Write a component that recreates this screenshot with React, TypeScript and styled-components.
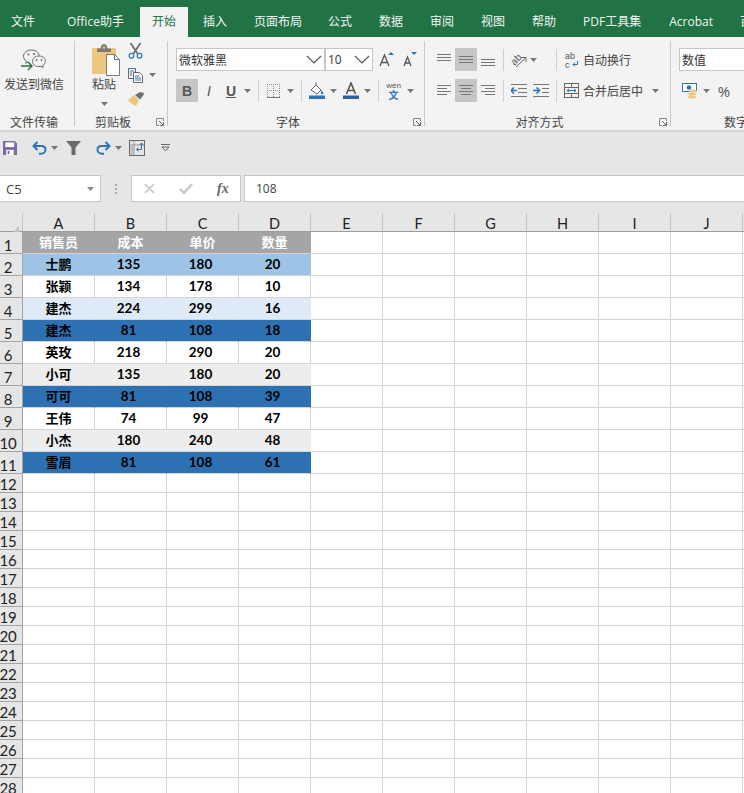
import * as React from "react";
import styled, { createGlobalStyle } from "styled-components";

const CJK = `"Noto Sans CJK SC", "Noto Sans", sans-serif`;
const CELL = `Lato, "Noto Sans CJK SC", sans-serif`;

const tabs = [
    { label: "文件", gap: -2.5 },
    { label: "Office助手", gap: 5 },
    { label: "开始", gap: 2.5 },
    { label: "插入", gap: 1.5 },
    { label: "页面布局", gap: 0 },
    { label: "公式", gap: -1 },
    { label: "数据", gap: 0 },
    { label: "审阅", gap: 0 },
    { label: "视图", gap: 0 },
    { label: "帮助", gap: 0 },
    { label: "PDF工具集", gap: 0 },
    { label: "Acrobat", gap: 1 },
    { label: "百度网盘", gap: 0 },
];
const columns = ["A", "B", "C", "D", "E", "F", "G", "H", "I", "J", "K"];

const tableRows = [
    { fill: "#a5a5a5", color: "#fff", cells: ["销售员", "成本", "单价", "数量"] },
    { fill: "#9dc3e6", cells: ["士鹏", "135", "180", "20"] },
    { cells: ["张颖", "134", "178", "10"] },
    { fill: "#deeaf6", cells: ["建杰", "224", "299", "16"] },
    { fill: "#2e71b3", cells: ["建杰", "81", "108", "18"] },
    { cells: ["英玫", "218", "290", "20"] },
    { fill: "#ededed", cells: ["小可", "135", "180", "20"] },
    { fill: "#2e71b3", cells: ["可可", "81", "108", "39"] },
    { cells: ["王伟", "74", "99", "47"] },
    { fill: "#ededed", cells: ["小杰", "180", "240", "48"] },
    { fill: "#2e71b3", cells: ["雪眉", "81", "108", "61"] },
];

const GlobalStyle = createGlobalStyle`
html, body {
    margin: 0;
    padding: 0;
    width: 744px;
    height: 793px;
    overflow: hidden;
    background: #fff;
}
`;

const Page = styled.div`
width: 744px;
height: 793px;
overflow: hidden;
display: flex;
flex-direction: column;
font-family: ${CJK};
color: #444;
`;

const TabBar = styled.div`
height: 37px;
flex: none;
box-sizing: border-box;
padding-top: 7px;
background: #217346;
display: flex;
white-space: nowrap;
`;

const Tab = styled.div<{ $active?: boolean; $gap?: number }>`
height: 30px;
flex: none;
box-sizing: border-box;
padding: 0 ${props => props.$active ? 12 : 13.5}px 2px;
margin-left: ${props => props.$gap || 0}px;
display: flex;
align-items: center;
font-size: 12px;
font-family: "Open Sans", ${CJK};
background: ${props => props.$active ? "#f3f3f3" : "transparent"};
color: ${props => props.$active ? "#217346" : "#f1f6f3"};
`;

const Ribbon = styled.div`
height: 93px;
flex: none;
box-sizing: border-box;
padding: 4px 0;
background: #f3f3f3;
display: flex;
overflow: hidden;
`;

const Group = styled.div<{ $w: number; $last?: boolean }>`
width: ${props => props.$w}px;
flex: none;
box-sizing: border-box;
display: flex;
flex-direction: column;
border-right: ${props => props.$last ? "none" : "1px solid #c8c8c8"};
`;

const GroupBody = styled.div<{ $pad?: number }>`
flex: 1;
min-height: 0;
box-sizing: border-box;
padding: 7px 0 0 ${props => props.$pad || 0}px;
display: flex;
`;

const GroupTitle = styled.div<{ $shift?: number }>`
height: 17px;
flex: none;
display: grid;
grid-template-columns: 1fr auto 1fr;
align-items: center;
font-size: 12px;
line-height: 17px;
color: #444;
margin-bottom: -4px;
& > span { grid-column: 2; margin-right: ${props => (props.$shift ?? 8) * 2}px; }
& > svg { justify-self: end; margin: 1px 3px 0 0; }
`;

const NumberTitle = styled.div`
padding-left: 53px;
font-size: 12px;
line-height: 17px;
height: 17px;
flex: none;
margin-bottom: -4px;
white-space: nowrap;
`;

const BigColumn = styled.div<{ $w: number; $top?: number }>`
width: ${props => props.$w}px;
flex: none;
display: flex;
flex-direction: column;
align-items: center;
margin-top: ${props => props.$top || 0}px;
`;

const BigLabel = styled.div<{ $top: number }>`
font-size: 12px;
line-height: 16px;
margin-top: ${props => props.$top}px;
white-space: nowrap;
color: #444;
`;

const PasteCaret = styled.div`
margin-top: 7px;
line-height: 0;
`;

const PasteGlyph = styled.div`
margin-left: 3px;
line-height: 0;
`;

const SmallTools = styled.div`
display: flex;
flex-direction: column;
margin: -5px 0 0 7px;
gap: 8px;
`;

const SmallTool = styled.div`
display: flex;
align-items: center;
height: 16px;
gap: 6px;
`;

const Rows = styled.div`
display: flex;
flex-direction: column;
gap: 8px;
`;

const ToolRow = styled.div`
height: 23px;
display: flex;
align-items: center;
`;

const Select = styled.div<{ $w: number }>`
width: ${props => props.$w}px;
height: 23px;
box-sizing: border-box;
flex: none;
padding: 0 2px 1px 2px;
display: flex;
align-items: center;
justify-content: space-between;
background: #fff;
border: 1px solid #c6c6c6;
font-size: 12px;
color: #333;
`;

const SizeText = styled.span`
font-family: "Open Sans", sans-serif;
`;

const ToolButton = styled.div<{ $w?: number; $active?: boolean; $ml?: number }>`
width: ${props => props.$w || 22}px;
height: 23px;
flex: none;
margin-left: ${props => props.$ml || 0}px;
display: flex;
align-items: center;
justify-content: center;
background: ${props => props.$active ? "#c6c6c6" : "transparent"};
color: #555;
`;

const StyleLetter = styled.span<{ $italic?: boolean; $under?: boolean }>`
font-family: "Liberation Sans", sans-serif;
font-size: 14px;
font-weight: ${props => props.$italic ? 400 : 700};
font-style: ${props => props.$italic ? "italic" : "normal"};
text-decoration: ${props => props.$under ? "underline" : "none"};
color: #555;
`;

const WenStack = styled.div`
display: flex;
flex-direction: column;
align-items: center;
`;

const WenTop = styled.span`
font-family: "Liberation Sans", sans-serif;
font-size: 8px;
line-height: 8px;
color: #555;
`;

const WenBottom = styled.span`
font-size: 10px;
line-height: 10px;
font-weight: 700;
color: #2e75b6;
`;

const PercentText = styled.span`
font-family: "Open Sans", sans-serif;
font-size: 15px;
color: #555;
`;

const Divider = styled.div<{ $l: number; $r: number }>`
width: 1px;
height: 22px;
flex: none;
background: #d0d0d0;
margin: 0 ${props => props.$r}px 0 ${props => props.$l}px;
`;

const ToolText = styled.span<{ $ml?: number }>`
font-size: 12px;
white-space: nowrap;
color: #444;
margin-left: ${props => props.$ml || 0}px;
`;

const QuickBar = styled.div`
height: 45px;
flex: none;
box-sizing: border-box;
border-top: 2px solid #d6d6d6;
background: #e6e6e6;
display: flex;
align-items: center;
padding: 0 0 12px 3px;
`;

const QuickItem = styled.div<{ $ml?: number }>`
display: flex;
align-items: center;
margin-left: ${props => props.$ml || 0}px;
gap: 4px;
`;

const FormulaBar = styled.div`
height: 27px;
flex: none;
background: #e6e6e6;
display: flex;
align-items: stretch;
`;

const NameBox = styled.div`
width: 101px;
flex: none;
box-sizing: border-box;
display: flex;
align-items: center;
justify-content: space-between;
padding: 0 6px 0 6px;
background: #fff;
border: 1px solid #c6c6c6;
border-left: none;
font-family: "Open Sans", sans-serif;
font-size: 13px;
color: #444;
`;

const Grip = styled.div`
width: 30px;
flex: none;
display: flex;
flex-direction: column;
align-items: center;
justify-content: center;
gap: 2px;
& > i { width: 2px; height: 2px; background: #a8a8a8; display: block; }
`;

const FxBox = styled.div`
width: 110px;
flex: none;
box-sizing: border-box;
display: flex;
align-items: center;
padding-left: 12px;
gap: 24px;
background: #fff;
border: 1px solid #c6c6c6;
`;

const FxMark = styled.span`
font-family: "Liberation Serif", serif;
font-style: italic;
font-weight: 700;
font-size: 14px;
color: #666;
`;

const FormulaInput = styled.div`
flex: 1;
margin-left: 3px;
box-sizing: border-box;
display: flex;
align-items: center;
padding-left: 11px;
background: #fff;
border: 1px solid #c6c6c6;
border-right: none;
font-family: "Open Sans", sans-serif;
font-size: 12px;
color: #444;
`;

const HeaderRow = styled.div`
height: 30px;
flex: none;
box-sizing: border-box;
padding-top: 11px;
background: #e6e6e6;
border-bottom: 1px solid #9c9c9c;
display: flex;
`;

const Corner = styled.div`
width: 23px;
flex: none;
box-sizing: border-box;
border-right: 1px solid #c4c4c4;
padding: 5px 0 0 8px;
`;

const ColumnHead = styled.div`
width: 72px;
flex: none;
box-sizing: border-box;
border-right: 1px solid #c0c0c0;
display: flex;
align-items: flex-end;
justify-content: center;
font-family: ${CELL};
font-size: 14.5px;
line-height: 15px;
color: #222;
`;

const SheetRow = styled.div<{ $h: number }>`
height: ${props => props.$h}px;
flex: none;
display: flex;
`;

const RowHead = styled.div`
width: 23px;
flex: none;
box-sizing: border-box;
padding-right: 6px;
background: #e6e6e6;
border-right: 1px solid #a4a4a4;
border-bottom: 1px solid #a4a4a4;
display: flex;
align-items: flex-end;
justify-content: center;
font-family: ${CELL};
font-size: 15px;
line-height: 15px;
letter-spacing: -0.3px;
color: #222;
`;

const Cell = styled.div<{ $fill?: string; $color?: string; $numeric?: boolean }>`
width: 72px;
flex: none;
box-sizing: border-box;
padding: 0 ${props => props.$numeric ? 4 : 0}px 2px 0;
background: ${props => props.$fill || "#fff"};
border-right: 1px solid ${props => props.$fill || "#d4d4d4"};
border-bottom: 1px solid #d4d4d4;
display: flex;
align-items: center;
justify-content: center;
font-family: ${CELL};
font-weight: 700;
font-size: ${props => props.$numeric ? 13.5 : 13}px;
color: ${props => props.$color || "#000"};
`;

const Caret = ({ color = "#777" }: { color?: string }) => (
    <svg width="7" height="4" viewBox="0 0 7 4"><path d="M0 0h7L3.5 4z" fill={color} /></svg>
);

const Chevron = () => (
    <svg width="16" height="9" viewBox="0 0 16 9" fill="none"><path d="M1 1l7 7 7-7" stroke="#555" strokeWidth="1.2" /></svg>
);

const Launcher = () => (
    <svg width="8" height="8" viewBox="0 0 8 8" fill="none">
        <path d="M7.5 3V.5H.5v7H3" stroke="#888" />
        <path d="M3 3l4 4M7.5 4v3.5H4" stroke="#666" />
    </svg>
);

const WeChatIcon = () => (
    <svg width="26" height="23" viewBox="0 0 26 23" fill="none">
        <path d="M10.5 1C5.8 1 2.5 3.8 2.5 7.3c0 2 1 3.6 2.8 4.8l-.6 2.2 2.5-1.3" stroke="#666" />
        <path d="M18.3 6.3C17.6 3 14.4 1 10.5 1" stroke="#666" />
        <path d="M18 7c-3.8 0-6.5 2.4-6.5 5.3s2.7 5.3 6.5 5.3c.8 0 1.5-.1 2.2-.3l2 1.2-.5-2c1.6-1 2.6-2.5 2.6-4.2C24.8 9.4 21.8 7 18 7z" fill="#f3f3f3" stroke="#666" />
        <circle cx="7.5" cy="5.5" r="1" fill="#666" />
        <circle cx="13" cy="5" r="1" fill="#666" />
        <circle cx="15.5" cy="11" r=".9" fill="#666" />
        <circle cx="20.5" cy="11" r=".9" fill="#666" />
        <path d="M0 17h11M7 13l4 4-4 4" stroke="#217346" strokeWidth="1.4" />
    </svg>
);

const PasteIcon = () => (
    <svg width="28" height="32" viewBox="0 0 28 32">
        <rect x="0" y="4" width="24" height="26" rx="1" fill="#edc67f" />
        <path d="M5 8V4.5h3.5C9 1 10.5 0 12 0s3 1 3.5 4.5H19V8z" fill="#7a7a7a" />
        <circle cx="12" cy="3.5" r="1.3" fill="#edc67f" />
        <path d="M14.5 10.5h8l5 5v16h-13z" fill="#fff" stroke="#777" />
        <path d="M22.5 10.5v5h5" fill="none" stroke="#777" />
    </svg>
);

const ScissorsIcon = () => (
    <svg width="15" height="16" viewBox="0 0 15 16" fill="none">
        <path d="M2.5 0l7 10.5M12.5 0l-7 10.5" stroke="#6a6a6a" strokeWidth="1.7" />
        <circle cx="3.5" cy="12.8" r="2.4" stroke="#2e75b6" strokeWidth="1.2" />
        <circle cx="11.5" cy="12.8" r="2.4" stroke="#2e75b6" strokeWidth="1.2" />
    </svg>
);

const CopyIcon = () => (
    <svg width="15" height="15" viewBox="0 0 15 15" fill="none">
        <path d="M.5.5h7v10h-7z" fill="#f3f3f3" stroke="#666" />
        <path d="M5.5 4.5h6l3 3v7h-9z" fill="#fff" stroke="#666" />
        <path d="M2 3h4M2 5h2M2 7h2" stroke="#2e75b6" />
        <path d="M7 8h4M7 10h6M7 12h6" stroke="#2e75b6" />
    </svg>
);

const BrushIcon = () => (
    <svg width="17" height="15" viewBox="0 0 17 15">
        <path d="M0 8l6-5 5 5-3 6c-3-1-6-3-8-6z" fill="#edc67f" />
        <path d="M7 3l5-3 4 1-.5 2-3.5 4.5z" fill="#6f6f6f" />
    </svg>
);

const BorderIcon = () => (
    <svg width="14" height="14" viewBox="0 0 14 14" fill="none">
        <path d="M0 .5h13M0 6.5h13M.5 0v13M6.5 0v13M12.5 0v13" stroke="#8a8a8a" strokeDasharray="1 1" />
        <path d="M0 13.5h13" stroke="#777" />
    </svg>
);

const FillIcon = () => (
    <svg width="16" height="17" viewBox="0 0 16 17" fill="none">
        <path d="M2 8l5-5 5 5-4 4z" fill="#fff" stroke="#666" />
        <path d="M7 3V.5" stroke="#666" />
        <path d="M12.5 8c1 1.5 1.8 2.5 1.8 3.3 0 .8-.8 1.2-1.5 1s-1-.7-1-1.2z" fill="#2e75b6" />
        <rect y="13.5" width="16" height="3.5" fill="#2e75b6" />
    </svg>
);

const FontColorIcon = () => (
    <svg width="16" height="17" viewBox="0 0 16 17" fill="none">
        <path d="M3.5 12L8 1l4.5 11M5 8.5h6" stroke="#555" strokeWidth="1.6" />
        <rect y="13.5" width="16" height="3.5" fill="#2f5f9e" />
    </svg>
);

const GrowIcon = ({ small }: { small?: boolean }) => (
    <svg width="15" height="15" viewBox="0 0 15 15" fill="none">
        {small
            ? <path d="M2 14L5.5 5 9 14M3.2 11h4.6" stroke="#555" strokeWidth="1.3" />
            : <path d="M1 14L5.5 3 10 14M2.5 10.5h6" stroke="#555" strokeWidth="1.3" />}
        {small
            ? <path d="M9 0h6l-3 3z" fill="#2e75b6" />
            : <path d="M9 3h6l-3-3z" fill="#2e75b6" />}
    </svg>
);

const AlignIcon = ({ lines }: { lines: [number, number, number][] }) => (
    <svg width="15" height="15" viewBox="0 0 15 15" fill="none" stroke="#777">
        {lines.map(([x1, y, x2], index) => <path key={index} d={`M${x1} ${y + .5}H${x2}`} />)}
    </svg>
);

const OrientIcon = () => (
    <svg width="17" height="16" viewBox="0 0 17 16" fill="none" overflow="visible">
        <text x="1" y="11" fontSize="10" fontFamily="Liberation Sans" fill="#555" transform="rotate(-45 6 8)">ab</text>
        <path d="M6 15L15.5 6M11.5 5.5H16V10" stroke="#666" />
    </svg>
);

const IndentIcon = ({ flip }: { flip?: boolean }) => (
    <svg width="16" height="13" viewBox="0 0 16 13" fill="none" stroke="#777">
        <path d={flip ? "M0 .5h16M9 4.5h7M9 8.5h7M0 12.5h16" : "M0 .5h16M7 4.5h9M7 8.5h9M0 12.5h16"} />
        {flip
            ? <path d="M0 6.5h6M3.5 3.5l3 3-3 3" stroke="#2e75b6" strokeWidth="1.6" />
            : <path d="M6 6.5H0M3 3.5l-3 3 3 3" stroke="#2e75b6" strokeWidth="1.6" />}
    </svg>
);

const WrapIcon = () => (
    <svg width="14" height="16" viewBox="0 0 14 16" fill="none" overflow="visible">
        <text x="0" y="7" fontSize="9" fontFamily="Liberation Sans" fill="#555">ab</text>
        <text x="0" y="15.5" fontSize="9" fontFamily="Liberation Sans" fill="#555">c</text>
        <path d="M12.5 9v3.5H8M10 10.5l-2 2 2 2" stroke="#2e75b6" />
    </svg>
);

const MergeIcon = () => (
    <svg width="15" height="15" viewBox="0 0 15 15" fill="none">
        <rect x=".5" y=".5" width="14" height="14" stroke="#666" />
        <path d="M0 4.5h15M0 10.5h15M7.5 0v4.5M7.5 10.5V15" stroke="#666" />
        <path d="M3 7.5h9M5 5.8L3 7.5l2 1.7M10 5.8l2 1.7-2 1.7" stroke="#2e75b6" />
    </svg>
);

const CurrencyIcon = () => (
    <svg width="16" height="16" viewBox="0 0 16 16">
        <rect x=".5" y=".5" width="14" height="8" fill="#fff" stroke="#2e75b6" />
        <circle cx="7" cy="4.5" r="2.3" fill="#2e75b6" />
        <ellipse cx="11" cy="8" rx="4" ry="1.6" fill="#edc67f" />
        <ellipse cx="10" cy="11" rx="4" ry="1.6" fill="#edc67f" />
        <ellipse cx="10" cy="14" rx="4" ry="1.6" fill="#edc67f" />
    </svg>
);

const SaveIcon = () => (
    <svg width="14" height="14" viewBox="0 0 15 15">
        <path d="M0 0h12.5L15 2.5V15H0z" fill="#7c6aa6" />
        <rect x="2.5" y="1.5" width="9.5" height="5" fill="#fff" />
        <rect x="3.5" y="9.5" width="8" height="5.5" fill="#fff" />
        <rect x="5" y="10.5" width="2" height="3.5" fill="#7c6aa6" />
    </svg>
);

const UndoIcon = ({ flip }: { flip?: boolean }) => (
    <svg width="15" height="14" viewBox="0 0 15 14" fill="none" transform={flip ? "scale(-1 1)" : undefined}>
        <path d="M1.5 5h8c2.5 0 4 1.5 4 3.8 0 2.2-2 3.9-4.5 3.9H7" stroke="#2e75b6" strokeWidth="2" />
        <path d="M5.5 1L1.5 5l4 4" stroke="#2e75b6" strokeWidth="2" />
    </svg>
);

const FilterIcon = () => (
    <svg width="15" height="14" viewBox="0 0 15 14"><path d="M0 0h15L9.5 6.5V14h-4V6.5z" fill="#6a6a6a" /></svg>
);

const FormIcon = () => (
    <svg width="16" height="16" viewBox="0 0 16 16" fill="none">
        <rect x=".5" y=".5" width="15" height="15" stroke="#666" />
        <path d="M.5 5h15M5 .5v15" stroke="#999" />
        <rect x="1.5" y="6" width="3" height="9" fill="#bbb" />
        <path d="M12.5 3v6.5h-5M9.5 7.5l-2 2 2 2M10.5 5l2-2 2 2" stroke="#2e75b6" />
    </svg>
);

const CustomizeIcon = () => (
    <svg width="9" height="8" viewBox="0 0 9 8" fill="none">
        <path d="M0 .5h9" stroke="#666" />
        <path d="M1 3h7L4.5 7z" stroke="#666" />
    </svg>
);

const CancelIcon = () => (
    <svg width="11" height="11" viewBox="0 0 11 11"><path d="M1 1l9 9M10 1l-9 9" stroke="#c8c8c8" strokeWidth="1.7" /></svg>
);

const EnterIcon = () => (
    <svg width="14" height="11" viewBox="0 0 14 11" fill="none"><path d="M1 6l4 4 8-9" stroke="#c8c8c8" strokeWidth="2.4" /></svg>
);

const CornerMark = () => (
    <svg width="11" height="11" viewBox="0 0 11 11"><path d="M11 0v11H0z" fill="#c4c4c4" /></svg>
);

export default function App() {
    const emptyRows = Array.from({ length: 17 }, (_, index) => index + 12);

    return <Page>
        <GlobalStyle />
        <TabBar>
            {tabs.map(tab => (
                <Tab key={tab.label} $active={tab.label === "开始"} $gap={tab.gap}>{tab.label}</Tab>
            ))}
        </TabBar>

        <Ribbon>
            <Group $w={75}>
                <GroupBody>
                    <BigColumn $w={68} $top={1}>
                        <WeChatIcon />
                        <BigLabel $top={4}>发送到微信</BigLabel>
                    </BigColumn>
                </GroupBody>
                <GroupTitle $shift={3}><span>文件传输</span></GroupTitle>
            </Group>

            <Group $w={93}>
                <GroupBody $pad={12}>
                    <BigColumn $w={34} $top={-4}>
                        <PasteGlyph><PasteIcon /></PasteGlyph>
                        <BigLabel $top={0}>粘贴</BigLabel>
                        <PasteCaret><Caret /></PasteCaret>
                    </BigColumn>
                    <SmallTools>
                        <SmallTool><ScissorsIcon /></SmallTool>
                        <SmallTool><CopyIcon /><Caret /></SmallTool>
                        <SmallTool><BrushIcon /></SmallTool>
                    </SmallTools>
                </GroupBody>
                <GroupTitle><span>剪贴板</span><Launcher /></GroupTitle>
            </Group>

            <Group $w={257}>
                <GroupBody $pad={8}>
                    <Rows>
                        <ToolRow>
                            <Select $w={149}>微软雅黑<Chevron /></Select>
                            <Select $w={48}><SizeText>10</SizeText><Chevron /></Select>
                            <ToolButton $w={24} $ml={1}><GrowIcon /></ToolButton>
                            <ToolButton $w={22}><GrowIcon small /></ToolButton>
                        </ToolRow>
                        <ToolRow>
                            <ToolButton $active><StyleLetter>B</StyleLetter></ToolButton>
                            <ToolButton><StyleLetter $italic>I</StyleLetter></ToolButton>
                            <ToolButton><StyleLetter $under>U</StyleLetter></ToolButton>
                            <ToolButton $w={10}><Caret /></ToolButton>
                            <Divider $l={6} $r={4} />
                            <ToolButton $w={22}><BorderIcon /></ToolButton>
                            <ToolButton $w={10}><Caret /></ToolButton>
                            <Divider $l={6} $r={4} />
                            <ToolButton $w={22}><FillIcon /></ToolButton>
                            <ToolButton $w={10}><Caret /></ToolButton>
                            <ToolButton $w={25}><FontColorIcon /></ToolButton>
                            <ToolButton $w={8}><Caret /></ToolButton>
                            <Divider $l={7} $r={2} />
                            <ToolButton $w={25}>
                                <WenStack><WenTop>wén</WenTop><WenBottom>文</WenBottom></WenStack>
                            </ToolButton>
                            <ToolButton $w={8}><Caret /></ToolButton>
                        </ToolRow>
                    </Rows>
                </GroupBody>
                <GroupTitle><span>字体</span><Launcher /></GroupTitle>
            </Group>

            <Group $w={246}>
                <GroupBody $pad={8}>
                    <Rows>
                        <ToolRow>
                            <ToolButton><AlignIcon lines={[[0, 2, 14], [0, 5, 14], [0, 8, 14]]} /></ToolButton>
                            <ToolButton $active><AlignIcon lines={[[0, 4, 14], [0, 7, 14], [0, 10, 14]]} /></ToolButton>
                            <ToolButton><AlignIcon lines={[[0, 7, 14], [0, 10, 14], [0, 13, 14]]} /></ToolButton>
                            <Divider $l={4} $r={4} />
                            <ToolButton $w={21}><OrientIcon /></ToolButton>
                            <ToolButton $w={8}><Caret /></ToolButton>
                            <Divider $l={19} $r={8} />
                            <WrapIcon />
                            <ToolText $ml={4}>自动换行</ToolText>
                        </ToolRow>
                        <ToolRow>
                            <ToolButton><AlignIcon lines={[[0, 2, 14], [0, 5, 10], [0, 8, 14], [0, 11, 10]]} /></ToolButton>
                            <ToolButton $active><AlignIcon lines={[[0, 2, 14], [2, 5, 12], [0, 8, 14], [2, 11, 12]]} /></ToolButton>
                            <ToolButton><AlignIcon lines={[[0, 2, 14], [4, 5, 14], [0, 8, 14], [4, 11, 14]]} /></ToolButton>
                            <Divider $l={4} $r={4} />
                            <ToolButton><IndentIcon /></ToolButton>
                            <ToolButton><IndentIcon flip /></ToolButton>
                            <Divider $l={4} $r={7} />
                            <MergeIcon />
                            <ToolText $ml={4}>合并后居中</ToolText>
                            <ToolButton $w={24}><Caret /></ToolButton>
                        </ToolRow>
                    </Rows>
                </GroupBody>
                <GroupTitle><span>对齐方式</span><Launcher /></GroupTitle>
            </Group>

            <Group $w={73} $last>
                <GroupBody $pad={8}>
                    <Rows>
                        <ToolRow>
                            <Select $w={80}>数值</Select>
                        </ToolRow>
                        <ToolRow>
                            <ToolButton $w={22}><CurrencyIcon /></ToolButton>
                            <ToolButton $w={10}><Caret /></ToolButton>
                            <ToolButton $w={26}><PercentText>%</PercentText></ToolButton>
                        </ToolRow>
                    </Rows>
                </GroupBody>
                <NumberTitle>数字</NumberTitle>
            </Group>
        </Ribbon>

        <QuickBar>
            <QuickItem><SaveIcon /></QuickItem>
            <QuickItem $ml={15}><UndoIcon /><Caret /></QuickItem>
            <QuickItem $ml={8}><FilterIcon /></QuickItem>
            <QuickItem $ml={15}><UndoIcon flip /><Caret /></QuickItem>
            <QuickItem $ml={7}><FormIcon /></QuickItem>
            <QuickItem $ml={16}><CustomizeIcon /></QuickItem>
        </QuickBar>

        <FormulaBar>
            <NameBox>C5<Caret color="#888" /></NameBox>
            <Grip><i /><i /><i /></Grip>
            <FxBox><CancelIcon /><EnterIcon /><FxMark>fx</FxMark></FxBox>
            <FormulaInput>108</FormulaInput>
        </FormulaBar>

        <HeaderRow>
            <Corner><CornerMark /></Corner>
            {columns.map(column => <ColumnHead key={column}>{column}</ColumnHead>)}
        </HeaderRow>

        {tableRows.map((row, index) => (
            <SheetRow key={index} $h={22}>
                <RowHead>{index + 1}</RowHead>
                {row.cells.map((text, cellIndex) => (
                    <Cell key={cellIndex} $fill={row.fill} $color={row.color} $numeric={/^\d+$/.test(text)}>{text}</Cell>
                ))}
                {columns.slice(4).map(column => <Cell key={column} />)}
            </SheetRow>
        ))}

        {emptyRows.map(rowNumber => (
            <SheetRow key={rowNumber} $h={19}>
                <RowHead>{rowNumber}</RowHead>
                {columns.map(column => <Cell key={column} />)}
            </SheetRow>
        ))}
    </Page>;
}
